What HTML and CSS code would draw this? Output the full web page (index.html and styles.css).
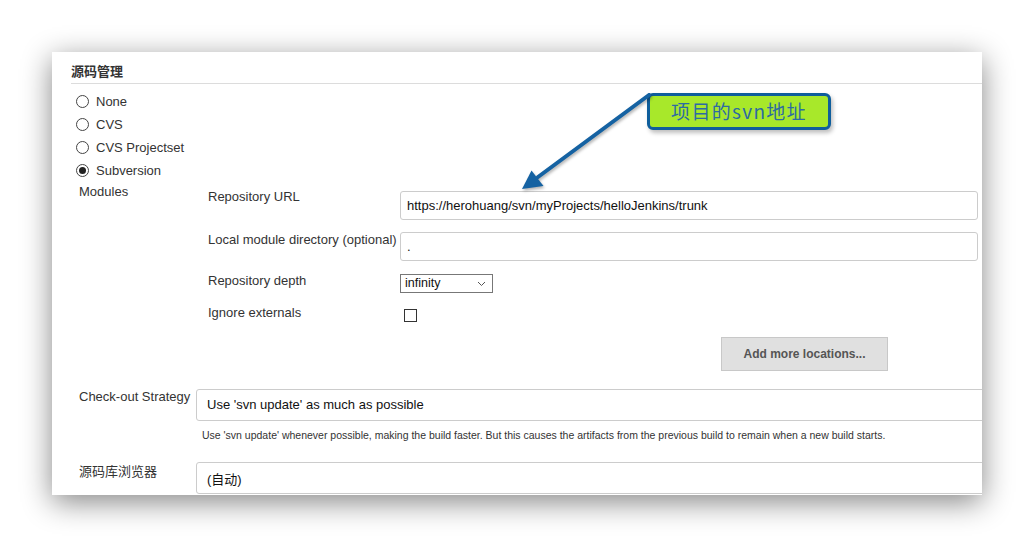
FILE: index.html
```html
<!DOCTYPE html>
<html lang="zh">
<head>
<meta charset="utf-8">
<title>源码管理</title>
<link rel="stylesheet" href="styles.css">
</head>
<body>
<div class="card">
  <div class="title">源码管理</div>
  <div class="radios">
    <div class="opt"><span class="radio"></span>None</div>
    <div class="opt"><span class="radio"></span>CVS</div>
    <div class="opt"><span class="radio"></span>CVS Projectset</div>
    <div class="opt"><span class="radio on"></span>Subversion</div>
  </div>
  <div class="modules">
    <div class="mod-label">Modules</div>
    <div class="repo">
      <div class="row row-url">
        <div class="lbl">Repository URL</div>
        <div class="text-input">https://herohuang/svn/myProjects/helloJenkins/trunk</div>
      </div>
      <div class="row row-local">
        <div class="lbl lbl-local">Local module directory (optional)</div>
        <div class="text-input">.</div>
      </div>
      <div class="row row-depth">
        <div class="lbl">Repository depth</div>
        <div class="small-select"><span>infinity</span>
          <svg class="chev" width="9" height="6" viewBox="0 0 9 6"><path d="M1 1 L4.5 4.5 L8 1" fill="none" stroke="#555" stroke-width="1"/></svg>
        </div>
      </div>
      <div class="row row-ext">
        <div class="lbl">Ignore externals</div>
        <span class="checkbox"></span>
      </div>
      <div class="btn-row"><button class="btn">Add more locations...</button></div>
    </div>
  </div>
  <div class="strategy">
    <div class="lbl2">Check-out Strategy</div>
    <div class="strategy-field">
      <div class="wide-select">Use 'svn update' as much as possible</div>
      <div class="help">Use 'svn update' whenever possible, making the build faster. But this causes the artifacts from the previous build to remain when a new build starts.</div>
    </div>
  </div>
  <div class="browser">
    <div class="lbl2 lbl-browser">源码库浏览器</div>
    <div class="wide-select">(自动)</div>
  </div>
</div>
<div class="callout">项目的svn地址</div>
<svg class="arrow" width="1034" height="548" viewBox="0 0 1034 548">
  <line x1="649" y1="95" x2="538" y2="177" stroke="#1562a2" stroke-width="4" stroke-linecap="round"/>
  <polygon points="522,189 531.5,170.5 543.5,186" fill="#1562a2"/>
</svg>
</body>
</html>
```
FILE: styles.css
```css
html, body {
  margin: 0;
  padding: 0;
  background: #ffffff;
}
body {
  width: 1034px;
  height: 548px;
  overflow: hidden;
  font-family: "Liberation Sans", Arial, "Noto Sans CJK SC", sans-serif;
  color: #333;
  position: relative;
}
.card {
  margin: 52px 0 0 52px;
  width: 930px;
  height: 443px;
  box-sizing: border-box;
  padding-left: 19px;
  background: #fff;
  overflow: hidden;
  box-shadow: 0 7px 28px rgba(0, 0, 0, 0.48);
}
.title {
  font-size: 13px;
  font-weight: bold;
  line-height: 16px;
  padding-top: 12px;
  padding-bottom: 3px;
  border-bottom: 1px solid #dcdcdc;
  color: #333;
}
.radios {
  padding-top: 6px;
  padding-left: 5px;
  display: flex;
  flex-direction: column;
}
.opt {
  height: 23px;
  display: flex;
  align-items: center;
  font-size: 13px;
}
.radio {
  width: 13px;
  height: 13px;
  box-sizing: border-box;
  border: 1px solid #444;
  border-radius: 50%;
  margin-right: 7px;
  background: #fff;
  position: relative;
}
.radio.on::after {
  content: "";
  position: absolute;
  left: 2px;
  top: 2px;
  width: 7px;
  height: 7px;
  border-radius: 50%;
  background: #222;
}
.modules {
  margin-top: 2px;
  padding-left: 8px;
  display: grid;
  grid-template-columns: 129px 1fr;
}
.mod-label {
  font-size: 13px;
  line-height: 16px;
}
.repo {
  padding-top: 6px;
}
.row {
  display: grid;
  grid-template-columns: 192px 578px;
  align-items: start;
}
.lbl {
  font-size: 13px;
  line-height: 14px;
  white-space: nowrap;
}
.row-url {
  margin-bottom: 12px;
}
.row-url .text-input {
  margin-top: 1px;
}
.row-local {
  margin-bottom: 13px;
}
.lbl-local {
  padding-top: 1px;
}
.row-depth {
  margin-bottom: 13px;
}
.text-input {
  height: 29px;
  box-sizing: border-box;
  border: 1px solid #cccccc;
  border-radius: 3px;
  padding-left: 6px;
  font-size: 13px;
  line-height: 27px;
  color: #111;
  background: #fff;
}
.small-select {
  width: 93px;
  height: 19px;
  box-sizing: border-box;
  border: 1px solid #777;
  padding: 0 6px 0 4px;
  font-size: 12.5px;
  line-height: 17px;
  color: #111;
  display: flex;
  justify-content: space-between;
  align-items: center;
}
.checkbox {
  display: block;
  width: 13px;
  height: 13px;
  box-sizing: border-box;
  border: 1px solid #333;
  margin: 3px 0 0 4px;
}
.btn-row {
  margin-top: 15px;
  padding-left: 513px;
}
.btn {
  width: 167px;
  height: 34px;
  box-sizing: border-box;
  border: 1px solid #c8c8c8;
  background: #e0e0e0;
  color: #555;
  font-family: "Liberation Sans", Arial, sans-serif;
  font-weight: bold;
  font-size: 12px;
  padding: 0;
}
.strategy {
  margin-top: 18px;
  padding-left: 8px;
  display: grid;
  grid-template-columns: 117px 1fr;
}
.lbl2 {
  font-size: 13px;
  line-height: 14px;
  padding-top: 1px;
  white-space: nowrap;
}
.wide-select {
  width: 900px;
  height: 32px;
  box-sizing: border-box;
  border: 1px solid #cccccc;
  border-radius: 3px;
  padding-left: 10px;
  font-size: 13px;
  line-height: 30px;
  color: #111;
}
.help {
  margin-top: 8px;
  padding-left: 6px;
  font-size: 10.5px;
  line-height: 12px;
  color: #333;
  white-space: nowrap;
}
.browser {
  margin-top: 21px;
  padding-left: 8px;
  display: grid;
  grid-template-columns: 117px 1fr;
}
.lbl-browser {
  padding-top: 3px;
}
.browser .wide-select {
  line-height: 33px;
}
.callout {
  position: absolute;
  left: 647px;
  top: 93px;
  width: 184px;
  height: 37px;
  box-sizing: border-box;
  border: 3px solid #0f5e9c;
  border-radius: 6px;
  background: #a8e82a;
  color: #2d6ba3;
  font-family: "Noto Sans CJK SC", "Liberation Sans", sans-serif;
  font-size: 19px;
  line-height: 30px;
  text-align: center;
  letter-spacing: 1.3px;
  box-shadow: 2px 3px 4px rgba(0, 0, 0, 0.25);
}
.arrow {
  position: absolute;
  left: 0;
  top: 0;
  pointer-events: none;
  filter: drop-shadow(1px 2px 1.5px rgba(0, 0, 0, 0.3));
}
```
